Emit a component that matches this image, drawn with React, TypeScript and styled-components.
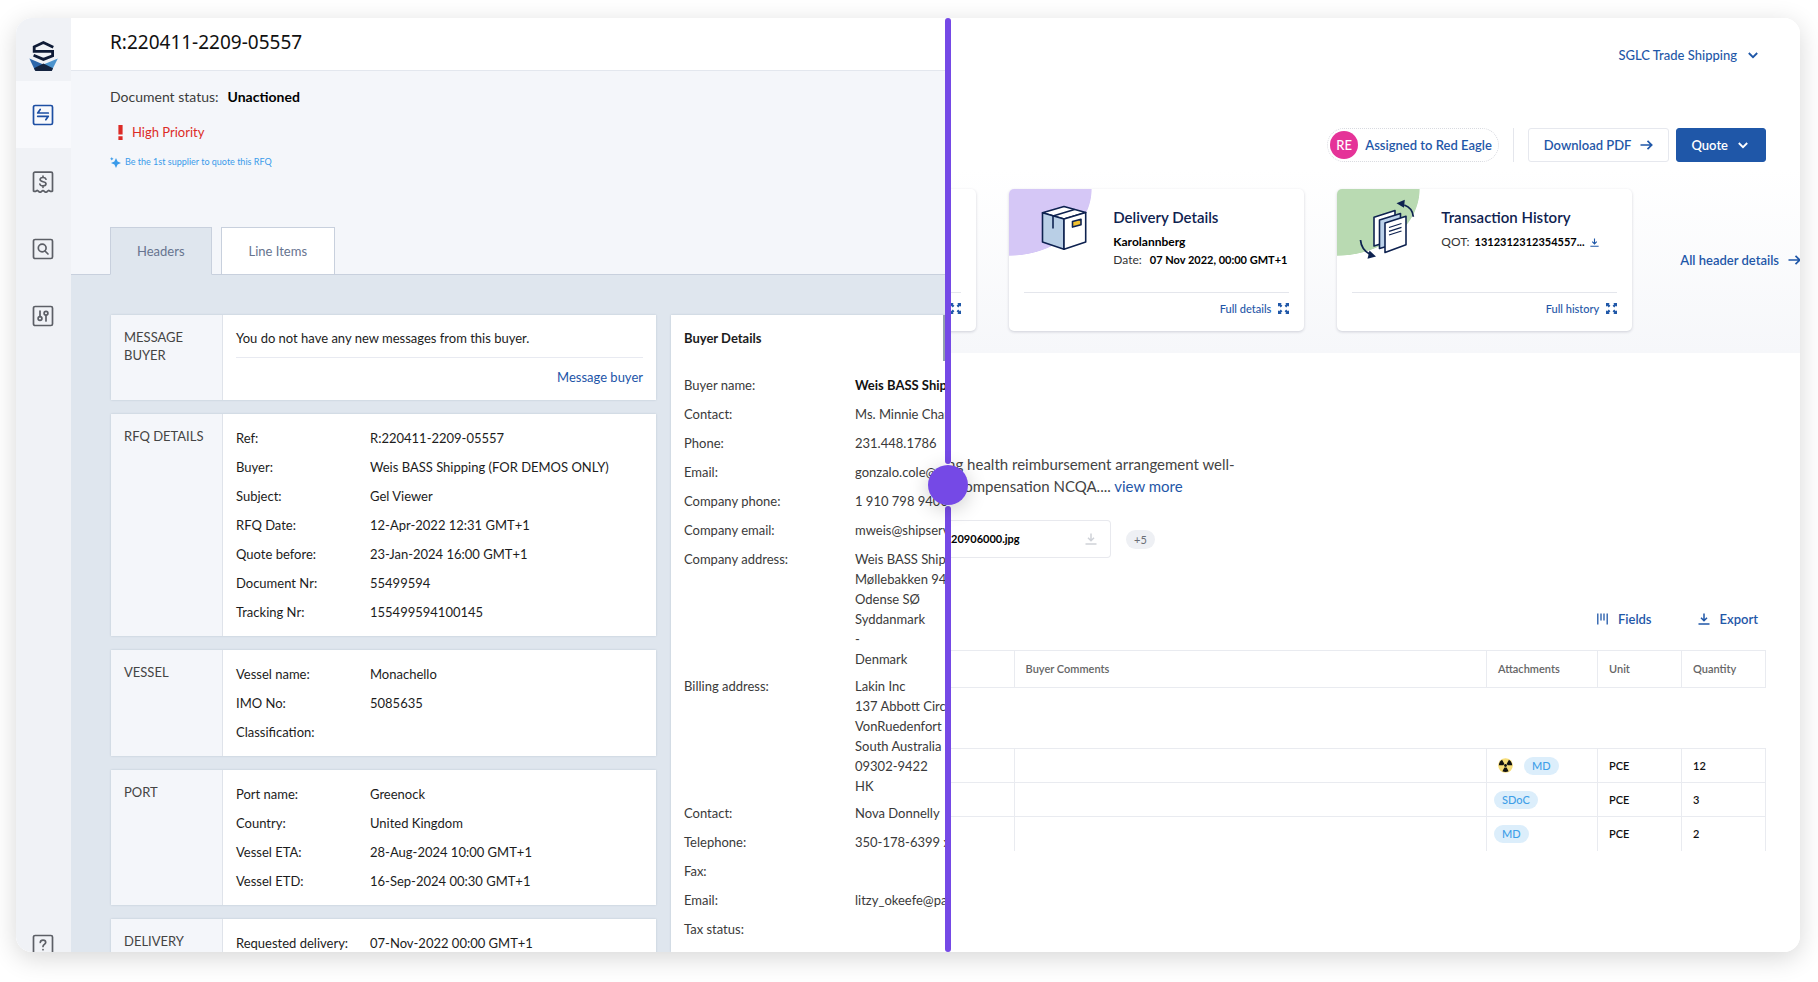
import React, { useState } from 'react';
import styled, { createGlobalStyle, css } from 'styled-components';

const blue = '#1f57a8';
const navy = '#0e2250';
const line = '#e9ebf0';

const GlobalStyle = createGlobalStyle`
  *, *::before, *::after { box-sizing: border-box; }
  body {
    margin: 0;
    background: #fff;
    color: #222;
    font-family: Lato, 'Liberation Sans', sans-serif;
    font-size: 13px;
    line-height: 20px;
  }
  a { color: inherit; text-decoration: none; }
  button { font: inherit; cursor: pointer; }
  svg { display: block; flex: none; }
`;

const Stage = styled.div`
  height: 100vh;
  min-height: 480px;
  padding: 18px 18px 30px 16px;
  overflow: hidden;
`;

const Frame = styled.main`
  position: relative;
  display: flex;
  height: 100%;
  background: #fff;
  border-radius: 16px;
  overflow: hidden;
`;

const FrameShadow = styled.div`
  height: 100%;
  border-radius: 16px;
  box-shadow: 0 6px 26px rgba(0, 0, 0, 0.16);
`;

/* ---------- comparison divider ---------- */

const Divider = styled.div`
  position: relative;
  display: flex;
  flex: none;
  flex-direction: column;
  gap: 42px;
  width: 6px;
  margin-left: -3px;
`;

const DividerBar = styled.span`
  flex: 1;
  border-radius: 3px;
  background: #7549e6;
`;

const thumb = css`
  width: 40px;
  height: 40px;
  border: 0;
  border-radius: 50%;
  background: #7549e6;
  box-shadow: 0 4px 20px rgba(0, 0, 0, 0.2);
  cursor: ew-resize;
  pointer-events: auto;
`;

const CompareRange = styled.input`
  position: absolute;
  inset: 0;
  width: 100%;
  height: 100%;
  margin: 0;
  appearance: none;
  background: transparent;
  pointer-events: none;
  &::-webkit-slider-thumb { appearance: none; ${thumb} }
  &::-moz-range-thumb { ${thumb} }
`;

/* ---------- old design ---------- */

const OldPane = styled.section`
  display: flex;
  flex: none;
  min-width: 0;
  overflow: hidden;
  white-space: nowrap;
`;

const Sidebar = styled.nav`
  display: flex;
  flex: none;
  flex-direction: column;
  width: 55px;
  background: #f0f2f6;
`;

const LogoLink = styled.a`
  display: flex;
  justify-content: center;
  height: 63px;
  padding-top: 22px;
`;

const NavLink = styled.a<{ $active?: boolean }>`
  display: flex;
  align-items: center;
  justify-content: center;
  height: 67px;
  padding-right: 1px;
  background: ${p => (p.$active ? '#f8f9fc' : 'transparent')};
  color: ${p => (p.$active ? '#1d4fa3' : '#5c5f66')};
`;

const HelpLink = styled.a`
  display: flex;
  justify-content: center;
  height: 18px;
  margin-top: auto;
  padding-right: 1px;
  color: #5c5f66;
`;

const OldMain = styled.div`
  display: flex;
  flex: 1;
  flex-direction: column;
  min-width: 0;
  background: #f4f6fa;
`;

const OldHeader = styled.header`
  flex: none;
  height: 53px;
  padding: 12px 39px;
  border-bottom: 1px solid #e3e7ee;
  background: #fff;
`;

const Title = styled.h1`
  margin: 0;
  color: #111;
  font: 400 19px/24px 'Noto Sans', 'Open Sans', sans-serif;
`;

const Status = styled.div`
  flex: none;
  height: 156px;
  padding: 16px 39px 0;
`;

const StatusLine = styled.p`
  display: flex;
  gap: 9px;
  margin: 0;
  font-size: 14px;
  color: #3c3c3c;
  strong { color: #000; }
`;

const Priority = styled.p`
  display: flex;
  align-items: center;
  gap: 9px;
  margin: 15px 0 0 8px;
  color: #dc2b26;
  font-size: 13px;
`;

const Hint = styled.p`
  display: flex;
  align-items: center;
  gap: 4px;
  margin: 10px 0 0;
  color: #3a9bea;
  font-size: 9px;
`;

const Tabs = styled.div`
  display: flex;
  flex: none;
  gap: 9px;
  height: 48px;
  padding: 0 39px;
  box-shadow: inset 0 -1px #c8d0dd;
`;

const Tab = styled.button<{ $active?: boolean }>`
  padding: 0 ${p => (p.$active ? 26 : 27)}px;
  border: 1px solid #c8d0dd;
  border-bottom-color: ${p => (p.$active ? '#dfe6ee' : '#c8d0dd')};
  background: ${p => (p.$active ? '#dfe6ee' : '#fff')};
  color: #67748f;
  font-size: 13px;
`;

const OldBody = styled.div`
  display: flex;
  flex: 1;
  align-items: flex-start;
  gap: 15px;
  min-height: 0;
  padding: 40px 0 0 40px;
  background: #dfe6ee;
`;

const Sections = styled.div`
  display: flex;
  flex: none;
  flex-direction: column;
  gap: 14px;
  width: 545px;
`;

const Section = styled.section`
  display: grid;
  grid-template-columns: 112px 1fr;
  background: #fff;
  box-shadow: 0 0 2px #bcc6d3;
`;

const SectionTitle = styled.h2`
  margin: 0;
  padding: 13px 0 0 13px;
  border-right: 1px solid #dfe3ea;
  background: #f4f6fa;
  color: #444;
  font-size: 13px;
  font-weight: 400;
  line-height: 18px;
  white-space: normal;
`;

const Fields = styled.dl`
  display: grid;
  grid-template-columns: 134px 1fr;
  row-gap: 9px;
  margin: 0;
  padding: 14px 13px;
  color: #1c1c1c;
`;

const Field = styled.div`
  display: contents;
  dd { margin: 0; }
`;

const MessageBody = styled.div`
  display: flex;
  flex-direction: column;
  padding: 13px;
  color: #1c1c1c;
  p { margin: 0; padding-bottom: 9px; border-bottom: 1px solid #e8eaf1; }
  a { align-self: flex-end; margin-top: 9px; color: #1d55a8; }
`;

const BuyerPanel = styled.section`
  position: relative;
  flex: 1;
  align-self: stretch;
  min-width: 0;
  padding: 13px 0 0 13px;
  background: #fff;
  box-shadow: 0 0 2px #bcc6d3;
  color: #3a3a3a;
  h2 { margin: 0 0 27px; color: #1c1c1c; font-size: 13px; line-height: 20px; }
  dl { display: flex; flex-direction: column; margin: 0; }
`;

const ScrollThumb = styled.span`
  position: absolute;
  top: 0;
  right: 0;
  width: 5px;
  height: 46px;
  background: #93a0ad;
`;

const BuyerField = styled.div<{ $tall: boolean; $strong?: boolean }>`
  display: grid;
  grid-template-columns: 171px auto;
  justify-content: start;
  padding-bottom: ${p => (p.$tall ? 7 : 9)}px;
  dd {
    min-height: 20px;
    margin: 0;
    white-space: pre;
    ${p => p.$strong && 'color: #111; font-weight: 700;'}
  }
`;

/* ---------- new design ---------- */

const NewPane = styled.section`
  flex: 1;
  min-width: 0;
  overflow: hidden;
  white-space: nowrap;
`;

const Hero = styled.div`
  height: 335px;
  background: linear-gradient(#fff 45%, #f6f7fa);
`;

const AccountBar = styled.div`
  display: flex;
  justify-content: flex-end;
  padding: 27px 41px 0 0;
`;

const AccountButton = styled.button`
  display: flex;
  align-items: center;
  gap: 10px;
  padding: 0;
  border: 0;
  background: none;
  color: ${blue};
  font-size: 13px;
  font-weight: 500;
`;

const Actions = styled.div`
  display: flex;
  justify-content: flex-end;
  height: 34px;
  margin: 63px 34px 27px 0;
  color: ${blue};
  font-size: 13px;
  font-weight: 600;
`;

const Assignee = styled.span`
  display: flex;
  align-items: center;
  gap: 7px;
  padding: 0 6px 0 2px;
  border: 1px dotted #d8dae0;
  border-radius: 17px;
`;

const Avatar = styled.span`
  width: 28px;
  height: 28px;
  border-radius: 50%;
  background: #e53398;
  color: #fff;
  font-weight: 500;
  line-height: 28px;
  text-align: center;
`;

const Rule = styled.span`
  width: 1px;
  margin: 0 14px;
  background: #e4e6ec;
`;

const ActionButton = styled.button<{ $primary?: boolean }>`
  display: flex;
  align-items: center;
  gap: 9px;
  margin-right: ${p => (p.$primary ? 0 : 7)}px;
  padding: 0 ${p => (p.$primary ? 16 : 15)}px 0 ${p => (p.$primary ? 14 : 15)}px;
  border: 1px solid ${p => (p.$primary ? blue : '#e6e8ee')};
  border-radius: 3px;
  background: ${p => (p.$primary ? blue : '#fff')};
  color: ${p => (p.$primary ? '#fff' : blue)};
  font-weight: 600;
`;

const CardRow = styled.div`
  display: flex;
  align-items: center;
  justify-content: flex-end;
`;

const InfoCard = styled.article`
  display: flex;
  flex: none;
  flex-direction: column;
  width: 295px;
  height: 142px;
  margin-left: 33px;
  border-radius: 5px;
  background: #fff;
  box-shadow: 0 1px 3px rgba(20, 30, 60, 0.18);
  overflow: hidden;
`;

const CardTop = styled.div`
  display: flex;
  flex: 1;
`;

const Art = styled.div<{ $tint: string }>`
  flex: none;
  width: 104px;
  padding: 10px 0 0 22px;
  background: radial-gradient(ellipse 83px 67px at 0 0, ${p => p.$tint} 99%, transparent);
`;

const CardText = styled.div`
  padding-top: 18px;
  color: #333;
  font-size: 12px;
  line-height: 18px;
  h3 { margin: 0 0 6px; color: ${navy}; font-size: 15px; font-weight: 600; line-height: 20px; }
  strong { color: #000; font-size: 11px; }
`;

const CardLine = styled.p<{ $gap?: number }>`
  display: flex;
  align-items: center;
  gap: ${p => p.$gap ?? 5}px;
  margin: 0;
  svg { color: ${blue}; }
`;

const CardPlace = styled.p`
  margin: 0;
  color: #000;
  font-weight: 700;
`;

const CardFooter = styled.a`
  display: flex;
  align-items: center;
  justify-content: flex-end;
  gap: 7px;
  height: 39px;
  margin: 0 15px;
  padding-bottom: 7px;
  border-top: 1px solid #e4e6ec;
  color: ${blue};
  font-size: 11px;
  font-weight: 500;
`;

const AllDetails = styled.a`
  display: flex;
  flex: none;
  align-items: center;
  gap: 9px;
  margin: 0 -1px 0 48px;
  color: ${blue};
  font-size: 13px;
  font-weight: 600;
`;

const Summary = styled.div`
  margin-top: 100px;
  color: #444;
  font-size: 15px;
  line-height: 22px;
  a { color: ${blue}; }
`;

const SummaryLine = styled.p<{ $indent: number }>`
  margin: 0 0 0 ${p => p.$indent}px;
`;

const Files = styled.div`
  display: flex;
  align-items: center;
  gap: 15px;
  margin-top: 23px;
`;

const FileChip = styled.a`
  display: flex;
  align-items: center;
  justify-content: space-between;
  width: 160px;
  height: 38px;
  padding-right: 13px;
  border: 1px solid #e8e9ee;
  border-left: 0;
  border-radius: 0 4px 4px 0;
  color: #000;
  font-size: 11px;
  font-weight: 700;
`;

const MoreButton = styled.button`
  height: 19px;
  padding: 0 8px;
  border: 0;
  border-radius: 10px;
  background: #eef0f4;
  color: #6a6e76;
  font-size: 11px;
`;

const TableTools = styled.div`
  display: flex;
  justify-content: flex-end;
  gap: 46px;
  margin: 51px 42px 21px 0;
`;

const ToolButton = styled.button`
  display: flex;
  align-items: center;
  gap: 10px;
  padding: 0;
  border: 0;
  background: none;
  color: ${blue};
  font-size: 13px;
  font-weight: 600;
`;

const TableWrap = styled.div`
  padding-right: 34px;
`;

const Table = styled.table`
  width: 100%;
  border-collapse: collapse;
  table-layout: fixed;
  font-size: 11px;
  font-weight: 600;
  line-height: 18px;
  text-align: left;
  th, td { padding: 0 11px; border-right: 1px solid ${line}; }
  th { height: 37px; border-top: 1px solid ${line}; border-bottom: 1px solid ${line}; color: #666; font-weight: 600; }
  td { height: 34px; border-top: 1px solid ${line}; color: #111; }
`;

const SpacerRow = styled.tr`
  td { height: 61px; border-right: 0; }
`;

const Tags = styled.div<{ $inset?: boolean }>`
  display: flex;
  align-items: center;
  gap: 11px;
  margin-left: ${p => (p.$inset ? 0 : -4)}px;
`;

const Tag = styled.span`
  padding: 0 8px;
  border-radius: 9px;
  background: #dceefb;
  color: #3f9fe8;
  font-weight: 500;
`;

/* ---------- icons ---------- */

const Logo = () => (
  <svg width="30" height="32" viewBox="0 0 30 32">
    <path d="M24.300 7.200 14.400 2.600 5.200 6.800v4.600h18.400v4.400L14.400 19.400 4.600 15.200" fill="none" stroke="#0f1b36" strokeWidth="2.800" />
    <path d="M.4 18.600 14.400 24.400 6 30.600Z" fill="#2c66ab" />
    <path d="M28.800 18.600 14.400 24.400 22.800 30.600Z" fill="#4b93cd" />
    <path d="M6.400 31h16.400l1.200-2.800-9.600-4.600-9.400 4.600Z" fill="#14233f" />
  </svg>
);

const BoxedIcon = ({ children, receipt }: { children: React.ReactNode; receipt?: boolean }) => (
  <svg width="22" height="22" viewBox="0 0 22 22" fill="none" stroke="currentColor" strokeWidth="1.700" strokeLinecap="round" strokeLinejoin="round">
    {receipt ? (
      <path d="M1.500 20V2.500a1.400 1.400 0 0 1 1.400-1.400h16.200a1.400 1.400 0 0 1 1.400 1.400V20c-1.600 1-2.600 0-3.600-.6-1.500.2-1.600 1.800-3 1.800s-1.600-1.600-2.900-1.600-1.500 1.600-2.900 1.600-1.500-1.600-3-1.800c-1 .6-2 1.600-3.600.6Z" />
    ) : (
      <rect x="1.500" y="1.500" width="19" height="19" rx="1.600" />
    )}
    {children}
  </svg>
);

const SwapIcon = () => (
  <BoxedIcon>
    <path d="M8.200 5.400 5.700 9h10.600M13.800 15.700l2.500-3.400H5.700" />
  </BoxedIcon>
);

const DollarIcon = () => (
  <BoxedIcon receipt>
    <path d="M14 8.200c-.4-1.100-1.500-1.700-3-1.700-1.700 0-2.900.8-2.900 2.100 0 3 5.900 1.300 5.900 4.200 0 1.300-1.300 2.100-3 2.100-1.600 0-2.800-.7-3.100-1.800M11 5.200v1.300M11 14.900v1.400" />
  </BoxedIcon>
);

const SearchIcon = () => (
  <BoxedIcon>
    <circle cx="10.200" cy="10" r="3.900" />
    <path d="m13 13 3 3" />
  </BoxedIcon>
);

const SlidersIcon = () => (
  <BoxedIcon>
    <path d="M8 6v5.500M14 16v-5.500" />
    <circle cx="8" cy="13.500" r="1.900" />
    <circle cx="14" cy="8.200" r="1.900" />
  </BoxedIcon>
);

const HelpIcon = () => (
  <BoxedIcon>
    <path d="M8.300 8.500c.1-1.600 1.200-2.400 2.700-2.400s2.700.9 2.700 2.300c0 1.900-2.700 2.100-2.700 4.100M11 15.500v.2" />
  </BoxedIcon>
);

const ExclamationIcon = () => (
  <svg width="5" height="15" viewBox="0 0 5 15" fill="currentColor">
    <path d="M.4 0h4.200v9.600H.4zM.4 11.200h4.200V15H.4z" />
  </svg>
);

const SparkleIcon = () => (
  <svg width="11" height="11" viewBox="0 0 11 11" fill="currentColor">
    <path d="M6 1 7.600 4.400 11 6 7.600 7.600 6 11 4.400 7.600 1 6 4.400 4.400ZM1.800 0l.6 1.200 1.200.6-1.200.6-.6 1.200-.6-1.200L0 1.800l1.200-.6Z" />
  </svg>
);

const Chevron = () => (
  <svg width="12" height="12" viewBox="0 0 12 12" fill="none" stroke="currentColor" strokeWidth="1.800">
    <path d="m1.800 4 4.200 4.200L10.200 4" />
  </svg>
);

const Arrow = () => (
  <svg width="13" height="12" viewBox="0 0 13 12" fill="none" stroke="currentColor" strokeWidth="1.700">
    <path d="M.5 6h11M7.500 1.800 11.700 6l-4.200 4.200" />
  </svg>
);

const DownloadIcon = ({ size = 12 }: { size?: number }) => (
  <svg width={size} height={size} viewBox="0 0 12 12" fill="none" stroke="currentColor" strokeWidth="1.500">
    <path d="M6 .5v7M3 4.800l3 3 3-3M.5 11h11" />
  </svg>
);

const ColumnsIcon = () => (
  <svg width="11" height="12" viewBox="0 0 11 12" fill="none" stroke="currentColor" strokeWidth="1.300">
    <path d="M.8.500v11M4 .5v7M7 .5v7M10.200.500v11" />
  </svg>
);

const ExpandIcon = () => (
  <svg width="11" height="11" viewBox="0 0 11 11" fill="currentColor">
    <path d="M0 0h3.800L2.700 1.100l1.700 1.700-1.600 1.600-1.700-1.700L0 3.800ZM11 0v3.800L9.900 2.700 8.200 4.400 6.600 2.800l1.700-1.700L7.200 0ZM0 11V7.200l1.100 1.100 1.700-1.700 1.600 1.600-1.700 1.700L3.800 11ZM11 11H7.200l1.100-1.100-1.700-1.700 1.600-1.600 1.700 1.700L11 7.200Z" />
  </svg>
);

const BoxArt = () => (
  <svg width="72" height="64" viewBox="0 0 72 64" stroke={navy} strokeWidth="1.600" strokeLinejoin="round">
    <path d="M11.500 13.700 33 7.500l21.700 6L33 20Z" fill="#fff" />
    <path d="M11.500 13.700 33 20v30.300l-21.500-7.200Z" fill="#b9cfe6" />
    <path d="M54.700 13.500 33 20v30.300l21.700-7.200Z" fill="#fff" />
    <path d="M22 29.500V17l21.500-6.500" fill="none" />
    <path d="m41.500 22.500 8.500-2.300v5.600l-8.500 2.300Z" fill="#f2c230" />
  </svg>
);

const HistoryArt = () => (
  <svg width="72" height="64" viewBox="0 0 72 64" stroke={navy} strokeWidth="1.600" strokeLinejoin="round">
    <path d="M15 18.200 36 11.500v29L15 47Z" fill="#fff" />
    <path d="M20.500 21 41.500 14.500v29l-21 6Z" fill="#bcd2ea" />
    <path d="m26 24 21-6.800v28.600L26 53.500Z" fill="#fff" />
    <path d="m30 28.500 12.500-4M30 32.300l12.500-4M30 36l12.500-4" fill="none" strokeWidth="1.300" />
    <path d="M54.300 17.800c-.5-6-3.800-10-9-11.800" fill="none" strokeWidth="1.800" />
    <path d="m37.500 4.200 8.300-3.400-.8 8Z" fill={navy} stroke="none" />
    <path d="M1.500 41c.5 6 3.800 11 9 14" fill="none" strokeWidth="1.800" />
    <path d="m17 57.600-8.500 2.200 2-8.300Z" fill={navy} stroke="none" />
  </svg>
);

const RadiationIcon = () => (
  <svg width="15" height="15" viewBox="0 0 16 16">
    <circle cx="8" cy="8" r="7.800" fill="#f6dd79" />
    <g fill="#111">
      <circle cx="8" cy="8" r="1.500" />
      <path d="M6.700 6.100 4.300 1.900A7.200 7.200 0 0 0 .9 7.600h4.800ZM9.300 6.100l2.400-4.200a7.200 7.200 0 0 1 3.400 5.700h-4.800ZM6.800 10.200l-2.100 3.900a7.200 7.200 0 0 0 6.600 0l-2.100-3.900Z" />
    </g>
  </svg>
);

const GreyIcon = styled.span`
  color: #cfd2d8;
`;

/* ---------- data ---------- */

const sections: { title: string; fields: [string, string][] }[] = [
  {
    title: 'RFQ DETAILS',
    fields: [
      ['Ref:', 'R:220411-2209-05557'],
      ['Buyer:', 'Weis BASS Shipping (FOR DEMOS ONLY)'],
      ['Subject:', 'Gel Viewer'],
      ['RFQ Date:', '12-Apr-2022 12:31 GMT+1'],
      ['Quote before:', '23-Jan-2024 16:00 GMT+1'],
      ['Document Nr:', '55499594'],
      ['Tracking Nr:', '155499594100145'],
    ],
  },
  {
    title: 'VESSEL',
    fields: [
      ['Vessel name:', 'Monachello'],
      ['IMO No:', '5085635'],
      ['Classification:', ''],
    ],
  },
  {
    title: 'PORT',
    fields: [
      ['Port name:', 'Greenock'],
      ['Country:', 'United Kingdom'],
      ['Vessel ETA:', '28-Aug-2024 10:00 GMT+1'],
      ['Vessel ETD:', '16-Sep-2024 00:30 GMT+1'],
    ],
  },
  { title: 'DELIVERY', fields: [['Requested delivery:', '07-Nov-2022 00:00 GMT+1']] },
];

const buyer: { label: string; value: string; strong?: boolean }[] = [
  { label: 'Buyer name:', value: 'Weis BASS Ship', strong: true },
  { label: 'Contact:', value: 'Ms. Minnie Char' },
  { label: 'Phone:', value: '231.448.1786' },
  { label: 'Email:', value: 'gonzalo.cole@t' },
  { label: 'Company phone:', value: '1 910 798 9400' },
  { label: 'Company email:', value: 'mweis@shipserv' },
  { label: 'Company address:', value: 'Weis BASS Ship\nMøllebakken 94\nOdense SØ\nSyddanmark\n-\nDenmark' },
  { label: 'Billing address:', value: 'Lakin Inc\n137 Abbott Circ\nVonRuedenfort\nSouth Australia\n09302-9422\nHK' },
  { label: 'Contact:', value: 'Nova Donnelly' },
  { label: 'Telephone:', value: '350-178-6399 x' },
  { label: 'Fax:', value: '' },
  { label: 'Email:', value: 'litzy_okeefe@pa' },
  { label: 'Tax status:', value: '' },
];

const items = [
  { tag: 'MD', hazard: true, unit: 'PCE', quantity: 12 },
  { tag: 'SDoC', hazard: false, unit: 'PCE', quantity: 3 },
  { tag: 'MD', hazard: false, unit: 'PCE', quantity: 2 },
];

function OldDesign() {
  return (
    <>
      <Sidebar aria-label="Main">
        <LogoLink href="#" aria-label="Home"><Logo /></LogoLink>
        <NavLink href="#" aria-label="Transactions" $active><SwapIcon /></NavLink>
        <NavLink href="#" aria-label="Billing"><DollarIcon /></NavLink>
        <NavLink href="#" aria-label="Search"><SearchIcon /></NavLink>
        <NavLink href="#" aria-label="Settings"><SlidersIcon /></NavLink>
        <HelpLink href="#" aria-label="Help"><HelpIcon /></HelpLink>
      </Sidebar>
      <OldMain>
        <OldHeader><Title>R:220411-2209-05557</Title></OldHeader>
        <Status>
          <StatusLine>Document status: <strong>Unactioned</strong></StatusLine>
          <Priority><ExclamationIcon />High Priority</Priority>
          <Hint><SparkleIcon />Be the 1st supplier to quote this RFQ</Hint>
        </Status>
        <Tabs role="tablist">
          <Tab role="tab" aria-selected $active>Headers</Tab>
          <Tab role="tab" aria-selected={false}>Line Items</Tab>
        </Tabs>
        <OldBody>
          <Sections>
            <Section>
              <SectionTitle>MESSAGE BUYER</SectionTitle>
              <MessageBody>
                <p>You do not have any new messages from this buyer.</p>
                <a href="#">Message buyer</a>
              </MessageBody>
            </Section>
            {sections.map(section => (
              <Section key={section.title}>
                <SectionTitle>{section.title}</SectionTitle>
                <Fields>
                  {section.fields.map(([label, value]) => (
                    <Field key={label}>
                      <dt>{label}</dt>
                      <dd>{value}</dd>
                    </Field>
                  ))}
                </Fields>
              </Section>
            ))}
          </Sections>
          <BuyerPanel>
            <h2>Buyer Details</h2>
            <dl>
              {buyer.map((field, i) => (
                <BuyerField key={i} $tall={field.value.includes('\n')} $strong={field.strong}>
                  <dt>{field.label}</dt>
                  <dd>{field.value}</dd>
                </BuyerField>
              ))}
            </dl>
            <ScrollThumb />
          </BuyerPanel>
        </OldBody>
      </OldMain>
    </>
  );
}

function NewDesign() {
  return (
    <>
      <Hero>
        <AccountBar>
          <AccountButton>SGLC Trade Shipping<Chevron /></AccountButton>
        </AccountBar>
        <Actions>
          <Assignee><Avatar>RE</Avatar>Assigned to Red Eagle</Assignee>
          <Rule />
          <ActionButton>Download PDF<Arrow /></ActionButton>
          <ActionButton $primary>Quote<Chevron /></ActionButton>
        </Actions>
        <CardRow>
          <InfoCard>
            <CardTop />
            <CardFooter href="#" aria-label="Expand"><ExpandIcon /></CardFooter>
          </InfoCard>
          <InfoCard>
            <CardTop>
              <Art $tint="#d5c7f6"><BoxArt /></Art>
              <CardText>
                <h3>Delivery Details</h3>
                <CardPlace>Karolannberg</CardPlace>
                <CardLine $gap={8}>Date: <strong>07 Nov 2022, 00:00 GMT+1</strong></CardLine>
              </CardText>
            </CardTop>
            <CardFooter href="#">Full details<ExpandIcon /></CardFooter>
          </InfoCard>
          <InfoCard>
            <CardTop>
              <Art $tint="#b9dab2"><HistoryArt /></Art>
              <CardText>
                <h3>Transaction History</h3>
                <CardLine>QOT: <strong>1312312312354557...</strong><DownloadIcon size={9} /></CardLine>
              </CardText>
            </CardTop>
            <CardFooter href="#">Full history<ExpandIcon /></CardFooter>
          </InfoCard>
          <AllDetails href="#">All header details<Arrow /></AllDetails>
        </CardRow>
      </Hero>
      <Summary>
        <SummaryLine $indent={-4}>ng health reimbursement arrangement well-</SummaryLine>
        <SummaryLine $indent={6}>compensation NCQA.... <a href="#">view more</a></SummaryLine>
      </Summary>
      <Files>
        <FileChip href="#">20906000.jpg<GreyIcon><DownloadIcon /></GreyIcon></FileChip>
        <MoreButton>+5</MoreButton>
      </Files>
      <TableTools>
        <ToolButton><ColumnsIcon />Fields</ToolButton>
        <ToolButton><DownloadIcon />Export</ToolButton>
      </TableTools>
      <TableWrap>
        <Table>
          <colgroup>
            <col width="63" />
            <col />
            <col width="111" />
            <col width="84" />
            <col width="84" />
          </colgroup>
          <thead>
            <tr>
              <th aria-label="Item" />
              <th scope="col">Buyer Comments</th>
              <th scope="col">Attachments</th>
              <th scope="col">Unit</th>
              <th scope="col">Quantity</th>
            </tr>
          </thead>
          <tbody>
            <SpacerRow><td colSpan={5} /></SpacerRow>
            {items.map((item, i) => (
              <tr key={i}>
                <td />
                <td />
                <td>
                  <Tags $inset={item.hazard}>
                    {item.hazard && <RadiationIcon />}
                    <Tag>{item.tag}</Tag>
                  </Tags>
                </td>
                <td>{item.unit}</td>
                <td>{item.quantity}</td>
              </tr>
            ))}
          </tbody>
        </Table>
      </TableWrap>
    </>
  );
}

export default function App() {
  const [split, setSplit] = useState(523);
  return (
    <Stage>
      <GlobalStyle />
      <FrameShadow>
        <Frame>
          <OldPane style={{ width: `calc(20px + (100% - 40px) * ${split / 1000})` }}>
            <OldDesign />
          </OldPane>
          <Divider>
            <DividerBar />
            <DividerBar />
          </Divider>
          <NewPane>
            <NewDesign />
          </NewPane>
          <CompareRange
            type="range"
            min={0}
            max={1000}
            value={split}
            aria-label="Compare designs"
            onChange={e => setSplit(Number(e.target.value))}
          />
        </Frame>
      </FrameShadow>
    </Stage>
  );
}
